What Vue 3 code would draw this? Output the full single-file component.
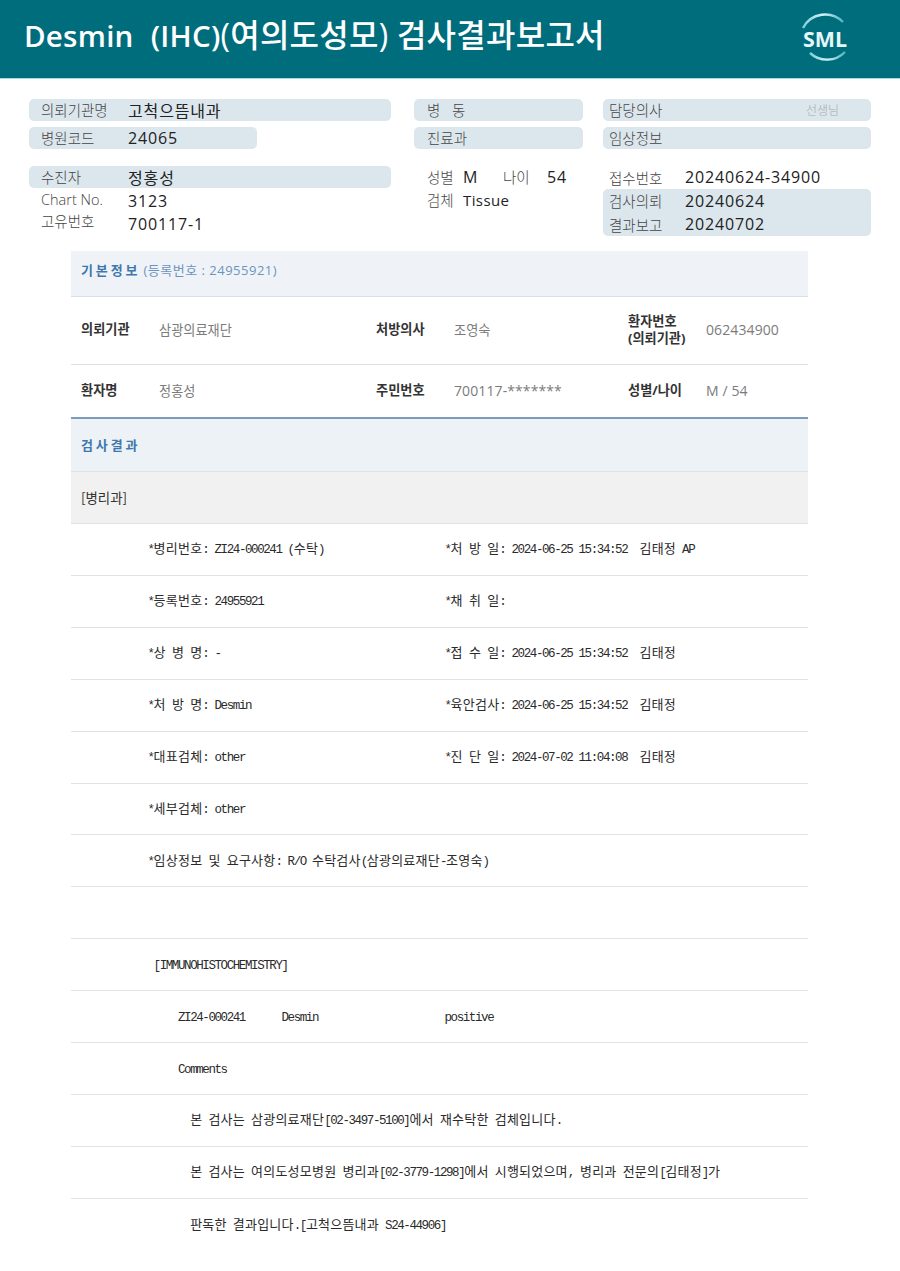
<script setup>
const mono = [
  ['*병리번호: ZI24-000241 (수탁)', '*처 방 일: 2024-06-25 15:34:52  김태정 AP'],
  ['*등록번호: 24955921', '*채 취 일:'],
  ['*상 병 명: -', '*접 수 일: 2024-06-25 15:34:52  김태정'],
  ['*처 방 명: Desmin', '*육안검사: 2024-06-25 15:34:52  김태정'],
  ['*대표검체: other', '*진 단 일: 2024-07-02 11:04:08  김태정'],
  ['*세부검체: other', ''],
  ['*임상정보 및 요구사항: R/O 수탁검사(삼광의료재단-조영숙)', ''],
  ['', ''],
  [' [IMMUNOHISTOCHEMISTRY]', ''],
  ['     ZI24-000241      Desmin', 'positive'],
  ['     Comments', ''],
  ['       본 검사는 삼광의료재단[02-3497-5100]에서 재수탁한 검체입니다.', ''],
  ['       본 검사는 여의도성모병원 병리과[02-3779-1298]에서 시행되었으며, 병리과 전문의[김태정]가', ''],
  ['       판독한 결과입니다.[고척으뜸내과 S24-44906]', '']
]

function runs(text) {
  return text
    .split(/([\uAC00-\uD7A3]+)/)
    .filter(Boolean)
    .map((t) => ({ t, ko: /[\uAC00-\uD7A3]/.test(t) }))
}
</script>

<template>
  <div class="page">
    <header class="top">
      <h1><span class="latin">Desmin</span> &nbsp;<span class="latin">(IHC)</span>(여의도성모) 검사결과보고서</h1>
      <svg class="logo" width="50" height="54" viewBox="0 0 50 54">
        <defs>
          <linearGradient id="arcA" x1="0" y1="0" x2="1" y2="0">
            <stop offset="0" stop-color="#7fcfd9" />
            <stop offset="0.5" stop-color="#d4f2f5" />
            <stop offset="1" stop-color="#4fb4c2" />
          </linearGradient>
        </defs>
        <path d="M3 16A25 25 0 0 1 43 10" fill="none" stroke="url(#arcA)" stroke-width="2.4" />
        <path d="M10 41A25 25 0 0 0 45 40" fill="none" stroke="url(#arcA)" stroke-width="2.4" />
        <text x="3" y="35" class="logo-text" textLength="44" lengthAdjust="spacingAndGlyphs">SML</text>
      </svg>
    </header>

    <section class="info">
      <div class="col col-left">
        <div class="pill"><span class="lab">의뢰기관명</span><span class="val">고척으뜸내과</span></div>
        <div class="pill short"><span class="lab">병원코드</span><span class="val">24065</span></div>
        <div class="pill block-start"><span class="lab">수진자</span><span class="val">정홍성</span></div>
        <div class="line"><span class="lab up1">Chart No.</span><span class="val">3123</span></div>
        <div class="line"><span class="lab up2">고유번호</span><span class="val">700117-1</span></div>
      </div>
      <div class="col col-mid">
        <div class="pill"><span class="lab spaced">병 동</span></div>
        <div class="pill"><span class="lab">진료과</span></div>
        <div class="line block-start">
          <span class="lab s1">성별</span><span class="val s2">M</span>
          <span class="lab s3">나이</span><span class="val">54</span>
        </div>
        <div class="line">
          <span class="lab s1">검체</span><span class="val small">Tissue</span>
        </div>
      </div>
      <div class="col col-right">
        <div class="pill between"><span class="lab">담당의사</span><span class="doc">선생님</span></div>
        <div class="pill"><span class="lab">임상정보</span></div>
        <div class="line block-start"><span class="lab">접수번호</span><span class="val">20240624-34900</span></div>
        <div class="panel">
          <div class="line"><span class="lab">검사의뢰</span><span class="val">20240624</span></div>
          <div class="line"><span class="lab">결과보고</span><span class="val">20240702</span></div>
        </div>
      </div>
    </section>

    <section class="table">
      <div class="title-row first">
        <strong>기본정보</strong><span class="reg">(등록번호 : 24955921)</span>
      </div>
      <div class="grid-row tall">
        <b>의뢰기관</b><span>삼광의료재단</span>
        <b>처방의사</b><span>조영숙</span>
        <b>환자번호<br />(의뢰기관)</b><span class="num">062434900</span>
      </div>
      <div class="grid-row low">
        <b>환자명</b><span>정홍성</span>
        <b>주민번호</b><span class="num">700117-*******</span>
        <b>성별/나이</b><span class="num">M / 54</span>
      </div>
      <div class="title-row second"><strong>검사결과</strong></div>
      <div class="dept">[병리과]</div>
      <div v-for="(row, i) in mono" :key="i" class="mono-row">
        <div v-for="(cell, j) in row" :key="j" :class="j === 0 && row[1] ? 'cell-a' : 'cell-b'">
          <span v-for="(r, k) in runs(cell)" :key="k" :class="r.ko ? 'ko' : 'la'">{{ r.t }}</span>
        </div>
      </div>
    </section>
  </div>
</template>

<style scoped>
.page {
  width: 900px;
  height: 1271px;
  overflow: hidden;
  background: #fff;
  font-family: "Open Sans", "Noto Sans CJK KR", sans-serif;
  color: #333;
}
.top {
  height: 78px;
  border-bottom: 1px solid #9fdbe3;
  background: #006d7d;
  display: flex;
  justify-content: space-between;
  padding: 0 50px 0 24px;
}
h1 {
  margin: 15px 0 0;
  color: #fff;
  font-size: 32px;
  font-weight: 500;
  line-height: 40px;
  letter-spacing: 0.25px;
  white-space: nowrap;
}
.latin { font-size: 29.5px; font-weight: 600; }
.logo { flex: none; margin-top: 12px; overflow: visible; }
.logo-text {
  fill: #e4f7f9;
  font-family: "Open Sans", sans-serif;
  font-size: 22px;
  font-weight: 700;
}
.info {
  display: flex;
  gap: 20px;
  padding: 20px 0 0 29px;
  height: 152px;
  font-size: 14.5px;
}
.col { display: flex; flex-direction: column; gap: 6px; }
.col-left { width: 362px; margin-right: 3px; }
.col-mid { width: 169px; }
.col-right { width: 268px; }
.pill, .line { box-sizing: border-box; }
.pill {
  height: 22px;
  padding-bottom: 1px;
  border-radius: 5px;
  background: #dce6ed;
  display: flex;
  align-items: center;
  flex: none;
}
.col-left .pill, .col-left .line { padding-left: 12px; }
.col-mid .pill, .col-mid .line { padding-left: 13px; }
.col-right .pill, .col-right .line { padding-left: 6px; }
.short { width: 228px; }
.block-start { margin-top: 11px; }
.line { height: 23px; display: flex; align-items: center; flex: none; }
.col-left .line { margin-top: -5px; }
.col-left .line + .line { margin-top: -6px; }
.col-mid .line { padding-bottom: 2px; }
.col-mid .line + .line { margin-top: -6px; }
.col-right > .line { padding-bottom: 1px; }
.lab { color: #444; font-weight: 300; white-space: pre; flex: none; }
.col-left .lab { width: 87px; }
.col-right .lab { width: 76px; }
.up1 { position: relative; top: -1px; }
.up2 { position: relative; top: -3px; }
.spaced { word-spacing: 8px; }
.val {
  font-size: 16px;
  letter-spacing: 0.85px;
  color: #222;
  white-space: nowrap;
}
.s1 { width: 36px; }
.s2 { width: 40px; }
.s3 { width: 44px; }
.small { font-size: 15px; letter-spacing: 0.4px; }
.between { justify-content: space-between; padding-right: 32px; }
.doc { color: #a9a9a9; font-size: 12px; font-weight: 300; }
.panel {
  height: 47px;
  margin-top: -6px;
  border-radius: 5px;
  background: #dce6ed;
  flex: none;
}
.panel .line { height: 23.5px; margin-top: 0; }
.col-right .panel .line + .line { margin-top: 0; }
.table {
  margin-left: 71px;
  width: 737px;
}
.title-row {
  display: flex;
  align-items: center;
  padding: 0 10px;
  box-sizing: border-box;
  font-size: 13px;
  color: #6c95be;
}
.title-row strong {
  color: #3f77ad;
  font-weight: 700;
  letter-spacing: 2.9px;
  margin-right: 3px;
}
.reg { letter-spacing: 0.5px; }
.first { height: 46px; padding-bottom: 8px; background: #eff3f8; border-bottom: 1px solid #d5e0ea; }
.second { height: 55px; padding-bottom: 2px; background: #edf2f7; border-top: 2px solid #7c9cba; border-bottom: 1px solid #dce2e8; }
.grid-row {
  display: grid;
  grid-template-columns: 78px 217px 78px 174px 78px 1fr;
  align-items: center;
  padding-left: 10px;
  padding-bottom: 2px;
  box-sizing: border-box;
  font-size: 13.2px;
  color: #7b7b7b;
}
.grid-row b { color: #333; font-weight: 700; line-height: 17px; white-space: nowrap; }
.num { font-size: 14px; letter-spacing: 0.1px; }
.tall { height: 68px; border-bottom: 1px solid #e0e0e0; }
.low { height: 52px; }
.dept {
  height: 52px;
  box-sizing: border-box;
  padding-left: 10px;
  padding-bottom: 2px;
  display: flex;
  align-items: center;
  background: #f1f1f1;
  border-bottom: 1px solid #e1e1e1;
  font-family: "Noto Sans CJK KR", sans-serif;
  font-size: 13.4px;
  color: #333;
}
.mono-row {
  height: 51.92px;
  box-sizing: border-box;
  padding-left: 76.5px;
  padding-bottom: 4px;
  display: flex;
  align-items: center;
  border-bottom: 1px solid #e2e2e2;
  white-space: pre;
  color: #2a2a2a;
}
.mono-row:last-child { border-bottom: 0; }
.cell-a { width: 297px; flex: none; }
.cell-b { flex: none; }
.ko {
  font-family: "Noto Sans CJK KR", sans-serif;
  font-size: 13px;
  letter-spacing: 0.22px;
}
.la {
  font-family: "Liberation Mono", monospace;
  font-size: 12.5px;
  letter-spacing: -1.41px;
}
</style>
